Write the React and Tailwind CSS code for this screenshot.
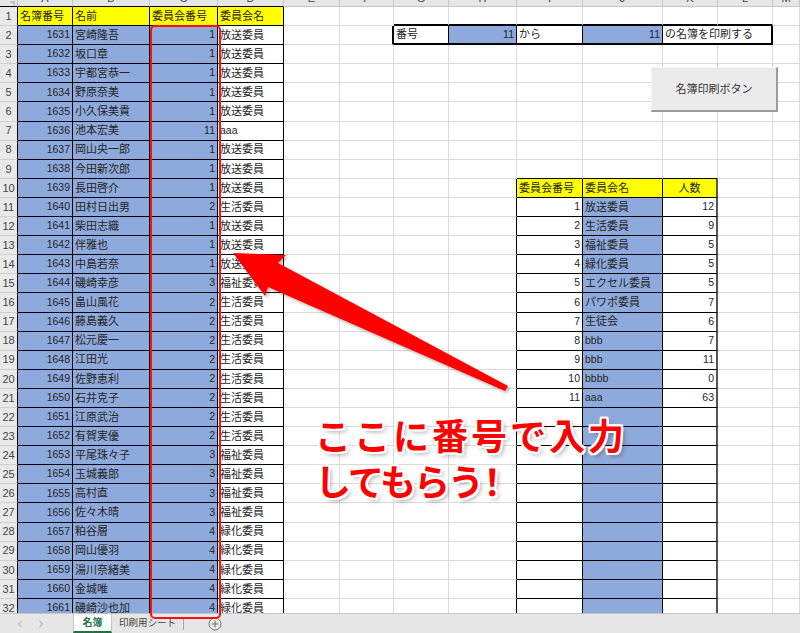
import React from "react";

const LEFT = [
  [1631, "宮崎隆吾", 1, "放送委員"],
  [1632, "坂口章", 1, "放送委員"],
  [1633, "宇都宮恭一", 1, "放送委員"],
  [1634, "野原奈美", 1, "放送委員"],
  [1635, "小久保美貴", 1, "放送委員"],
  [1636, "池本宏美", 11, "aaa"],
  [1637, "岡山央一郎", 1, "放送委員"],
  [1638, "今田新次郎", 1, "放送委員"],
  [1639, "長田啓介", 1, "放送委員"],
  [1640, "田村日出男", 2, "生活委員"],
  [1641, "柴田志織", 1, "放送委員"],
  [1642, "伴雅也", 1, "放送委員"],
  [1643, "中島若奈", 1, "放送委員"],
  [1644, "磯崎幸彦", 3, "福祉委員"],
  [1645, "畠山風花", 2, "生活委員"],
  [1646, "藤島義久", 2, "生活委員"],
  [1647, "松元慶一", 2, "生活委員"],
  [1648, "江田光", 2, "生活委員"],
  [1649, "佐野恵利", 2, "生活委員"],
  [1650, "石井克子", 2, "生活委員"],
  [1651, "江原武治", 2, "生活委員"],
  [1652, "有賀実優", 2, "生活委員"],
  [1653, "平尾珠々子", 3, "福祉委員"],
  [1654, "玉城義郎", 3, "福祉委員"],
  [1655, "高村直", 3, "福祉委員"],
  [1656, "佐々木晴", 3, "福祉委員"],
  [1657, "粕谷層", 4, "緑化委員"],
  [1658, "岡山優羽", 4, "緑化委員"],
  [1659, "湯川奈緒美", 4, "緑化委員"],
  [1660, "金城唯", 4, "緑化委員"],
  [1661, "磯崎沙也加", 4, "緑化委員"],
];

const RIGHT = [
  [1, "放送委員", 12],
  [2, "生活委員", 9],
  [3, "福祉委員", 5],
  [4, "緑化委員", 5],
  [5, "エクセル委員", 5],
  [6, "パワポ委員", 7],
  [7, "生徒会", 6],
  [8, "bbb", 7],
  [9, "bbb", 11],
  [10, "bbbb", 0],
  [11, "aaa", 63],
];

const LETTERS = ["A", "B", "C", "D", "E", "F", "G", "H", "I", "J", "K", "L", "M"];
const BLUE = "bg-[#8ea9db]";
const YELLOW = "bg-[#ffff00]";

function getCell(r, c) {
  let text = "";
  let align = "left";
  let bg = "bg-white";
  if (c >= 1 && c <= 4) {
    if (r === 1) {
      bg = YELLOW;
      text = ["名簿番号", "名前", "委員会番号", "委員会名"][c - 1];
    } else {
      const d = LEFT[r - 2];
      text = d[c - 1];
      align = c === 1 || c === 3 ? "right" : "left";
      bg = c <= 3 ? BLUE : "bg-white";
    }
  }
  if (r === 2) {
    if (c === 7) text = "番号";
    if (c === 8) { text = 11; align = "right"; bg = BLUE; }
    if (c === 9) text = "から";
    if (c === 10) { text = 11; align = "right"; bg = BLUE; }
    if (c === 11) text = "の名簿を印刷する";
  }
  if (r >= 10 && c >= 9 && c <= 11) {
    if (r === 10) {
      bg = YELLOW;
      text = ["委員会番号", "委員会名", "人数"][c - 9];
      align = c === 11 ? "center" : "left";
    } else {
      bg = c === 10 ? BLUE : "bg-white";
      const d = RIGHT[r - 11];
      if (d) {
        text = d[c - 9];
        align = c === 10 ? "left" : "right";
      }
    }
  }

  let rb = "border-r border-r-[#dadada]";
  let bb = "border-b border-b-[#dadada]";
  if (c <= 4) {
    rb = "border-r border-r-black";
    bb = "border-b border-b-black";
  }
  if (r === 1 && c >= 7 && c <= 12) bb = "border-b-2 border-b-black";
  if (r === 2) {
    if (c === 6) rb = "border-r-2 border-r-black";
    if (c >= 7 && c <= 10) rb = "border-r border-r-black";
    if (c === 11) rb = "border-r-2 border-r-black";
    if (c >= 7 && c <= 11) bb = "border-b-2 border-b-black";
  }
  if (r === 9 && c >= 9 && c <= 11) bb = "border-b border-b-black";
  if (r >= 10) {
    if (c === 8) rb = "border-r border-r-black";
    if (c === 9 || c === 10) {
      rb = "border-r border-r-black";
      bb = "border-b border-b-black";
    }
    if (c === 11) {
      rb = "border-r-2 border-r-[#555]";
      bb = "border-b border-b-black";
    }
  }
  return { text, align, bg, rb, bb };
}

function Cell({ r, c }) {
  const { text, align, bg, rb, bb } = getCell(r, c);
  const span = r === 2 && c === 11 ? "col-span-2" : "";
  const isAscii = typeof text === "number" || /^[\x00-\x7f]*$/.test(String(text));
  const size = isAscii ? "text-[10.5px]" : "text-[11px]";
  const al =
    align === "right"
      ? "justify-end pr-[2px]"
      : align === "center"
      ? "justify-center"
      : "justify-start pl-[2px]";
  return (
    <div
      className={`${bg} ${rb} ${bb} ${span} ${al} ${size} flex items-center overflow-hidden whitespace-nowrap text-[#262626]`}
    >
      {text}
    </div>
  );
}

function Row({ r }) {
  const cells = [];
  for (let c = 1; c <= 13; c++) {
    if (r === 2 && c === 12) continue;
    cells.push(<Cell key={c} r={r} c={c} />);
  }
  return (
    <div className="grid h-[19.1px] shrink-0 grid-cols-[18px_55px_77px_68px_66px_56px_54px_55px_68px_66px_80px_55px_55px_27px]">
      <div className="flex items-center justify-center border-r border-b border-r-black border-b-[#cfcfcf] bg-[#e9e9e9] text-[11px] text-[#444]">
        {r}
      </div>
      {cells}
    </div>
  );
}

function HeaderRow() {
  return (
    <div className="grid h-[7px] shrink-0 grid-cols-[18px_55px_77px_68px_66px_56px_54px_55px_68px_66px_80px_55px_55px_27px]">
      <div className="flex items-end justify-end overflow-hidden border-r border-b border-r-[#c6c6c6] border-b-black bg-[#e6e6e6] pr-[2px]">
        <div className="h-0 w-0 border-l-[6px] border-t-[5px] border-l-transparent border-t-[#c4c4c4]"></div>
      </div>
      {LETTERS.map((l, i) => (
        <div
          key={l}
          className={`overflow-hidden border-r border-b border-r-[#c6c6c6] bg-[#e6e6e6] ${
            i < 4 ? "border-b-black" : "border-b-[#c6c6c6]"
          }`}
        >
          <div className="-mt-[12px] flex h-[20px] items-center justify-center text-[11px] text-[#444]">
            {l}
          </div>
        </div>
      ))}
    </div>
  );
}

export default function App() {
  const rows = [];
  for (let r = 1; r <= 32; r++) rows.push(<Row key={r} r={r} />);
  return (
    <div className="relative h-[633px] w-[800px] overflow-hidden bg-white font-['Liberation_Sans','Noto_Sans_CJK_JP',sans-serif]">
      <div className="flex h-[613px] flex-col overflow-hidden">
        <HeaderRow />
        {rows}
      </div>

      {/* sheet tabs */}
      <div className="flex h-[20px] items-stretch border-t border-[#c6c6c6] bg-[#e6e6e6]">
        <div className="flex w-[73px] items-center gap-[15px] pl-[17px]">
          <svg width="6" height="8" viewBox="0 0 6 8">
            <path d="M4.5 1 L1.5 4 L4.5 7" fill="none" stroke="#bdbdbd" strokeWidth="1.2" />
          </svg>
          <svg width="6" height="8" viewBox="0 0 6 8">
            <path d="M1.5 1 L4.5 4 L1.5 7" fill="none" stroke="#bdbdbd" strokeWidth="1.2" />
          </svg>
        </div>
        <div className="flex w-[39px] items-center justify-center border-x border-b-2 border-x-[#c6c6c6] border-b-[#217346] bg-white text-[10px] font-bold text-[#217346]">
          名簿
        </div>
        <div className="flex w-[71px] items-center justify-center text-[9.5px] text-[#444]">
          印刷用シート
        </div>
        <div className="my-[3px] w-px bg-[#a8a8a8]"></div>
        <div className="ml-[24px] flex items-center">
          <svg width="14" height="14" viewBox="0 0 14 14">
            <circle cx="7" cy="7" r="6" fill="none" stroke="#777" strokeWidth="1" />
            <path d="M7 3.8 V10.2 M3.8 7 H10.2" stroke="#777" strokeWidth="1.2" />
          </svg>
        </div>
      </div>

      {/* print button shape */}
      <div className="absolute left-[651px] top-[67px] flex h-[45px] w-[127px] items-center justify-center border-t border-l border-r-2 border-b-2 border-t-[#f4f4f4] border-l-[#f4f4f4] border-r-[#9a9a9a] border-b-[#9a9a9a] bg-[#ebebeb] text-[11px] text-[#333]">
        名簿印刷ボタン
      </div>

      {/* red rounded rectangle */}
      <div className="pointer-events-none absolute left-[150px] top-[25px] h-[594px] w-[71px] rounded-[5px] border-2 border-[#ff1010]"></div>

      {/* arrow */}
      <svg
        className="pointer-events-none absolute left-0 top-0"
        width="800"
        height="633"
        viewBox="0 0 800 633"
      >
        <defs>
          <filter id="ash" x="-10%" y="-10%" width="130%" height="130%">
            <feDropShadow dx="2" dy="2" stdDeviation="1.5" floodColor="#000" floodOpacity="0.3" />
          </filter>
        </defs>
        <polygon
          points="233,253 286,255 278,263 508,386 505,391 268,287 265,296"
          fill="#ff0000"
          filter="url(#ash)"
        />
      </svg>

      {/* callout text */}
      <div className="pointer-events-none absolute left-[315px] top-[411px] font-['Noto_Sans_CJK_JP',sans-serif] text-[36px] font-bold leading-[46px] text-[#ff0000] [text-shadow:2px_0_0_#fff,-2px_0_0_#fff,0_2px_0_#fff,0_-2px_0_#fff,2px_2px_0_#fff,-2px_-2px_0_#fff,2px_-2px_0_#fff,-2px_2px_0_#fff,3px_3px_5px_rgba(0,0,0,0.35)]">
        <div className="tracking-[3px]">ここに番号で入力</div>
        <div className="tracking-[-2px]">
          してもらう<span className="-ml-[8px]">！</span>
        </div>
      </div>
    </div>
  );
}
